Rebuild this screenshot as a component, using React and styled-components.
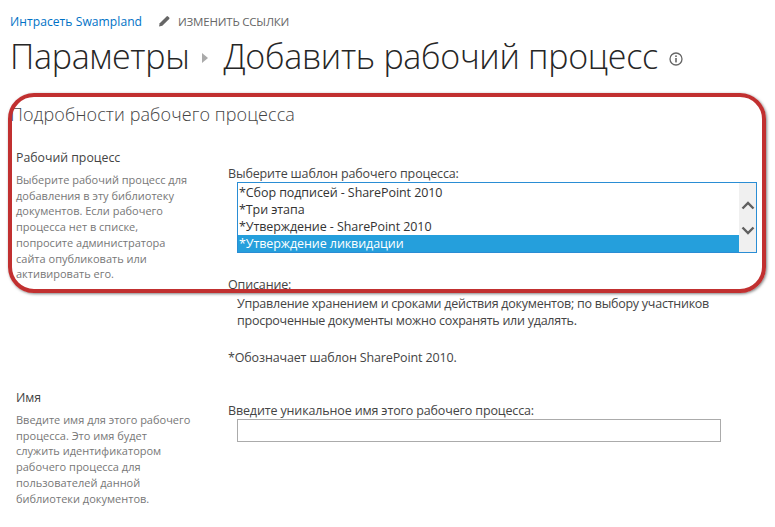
import React from "react";
import styled, { createGlobalStyle } from "styled-components";

const GlobalStyle = createGlobalStyle`
  html, body {
    margin: 0;
    background: #fff;
    font-family: "Open Sans", "Noto Sans", sans-serif;
    color: #444;
  }
`;

const Page = styled.div`
  position: relative;
  width: 775px;
  height: 527px;
  overflow: hidden;
  background: #fff;
`;

const TopBar = styled.div`
  display: flex;
  align-items: center;
  height: 16px;
  padding: 13px 0 0 10px;
`;

const SiteLink = styled.a`
  color: #0072c6;
  text-decoration: none;
  font-size: 12.1px;
  letter-spacing: 0.05px;
  white-space: nowrap;
`;

const EditLinks = styled.span`
  display: flex;
  align-items: center;
  gap: 7px;
  margin-left: 16px;
  color: #666;
  font-size: 11.5px;
  letter-spacing: -0.2px;
  white-space: nowrap;
`;

const Title = styled.h1`
  display: flex;
  align-items: center;
  margin: 3px 0 0 10px;
  height: 48px;
  font-family: "Open Sans", "Roboto", sans-serif;
  font-size: 34px;
  font-weight: 300;
  color: #262626;
  letter-spacing: -0.3px;
  white-space: nowrap;
`;

const Crumb = styled.svg`
  margin: 3px 15px 0 13px;
`;

const InfoIcon = styled.svg`
  margin: 5px 0 0 11px;
`;

const SectionTitle = styled.h2`
  margin: 22px 0 0 10px;
  height: 24px;
  font-size: 18px;
  line-height: 24px;
  font-weight: 300;
  color: #444;
  letter-spacing: 0.1px;
`;

const Row = styled.section`
  display: grid;
  grid-template-columns: 212px 1fr;
  padding-left: 16px;
  margin-top: ${(p) => p.$top}px;
`;

const Side = styled.div`
  width: 177px;
`;

const SideTitle = styled.div`
  font-size: 12.3px;
  line-height: 16px;
  color: #444;
`;

const SideText = styled.p`
  margin: 6px 0 0;
  font-size: 11px;
  line-height: 15.7px;
  color: #777;
`;

const Main = styled.div`
  padding-top: ${(p) => p.$top}px;
  font-size: 12.5px;
  color: #444;
  letter-spacing: -0.14px;
`;

const Label = styled.div`
  line-height: 16px;
`;

const ListBox = styled.div`
  display: flex;
  box-sizing: border-box;
  width: 520px;
  height: 71px;
  margin: 0 0 0 9px;
  border: 1px solid #2a8dd4;
  letter-spacing: -0.08px;
`;

const Options = styled.div`
  flex: 1;
  display: flex;
  flex-direction: column;
  padding-top: 1px;
`;

const Option = styled.div`
  height: 17px;
  padding-left: 1px;
  line-height: 18px;
  color: ${(p) => (p.$selected ? "#fff" : "#333")};
  background: ${(p) => (p.$selected ? "#259fdc" : "transparent")};
`;

const ScrollBar = styled.div`
  width: 17px;
  display: flex;
  flex-direction: column;
  align-items: center;
  gap: 16px;
  padding-top: 18px;
  box-sizing: border-box;
  background: #f0f0f0;
`;

const DescLabel = styled(Label)`
  margin-top: 24px;
`;

const Description = styled.p`
  margin: 2px 0 0 9px;
  line-height: 17px;
  width: 510px;
  letter-spacing: -0.25px;
`;

const Note = styled.p`
  margin: 21px 0 0;
  line-height: 16px;
`;

const NameInput = styled.input`
  display: block;
  width: 484px;
  height: 23px;
  margin: 0 0 0 9px;
  padding: 0;
  box-sizing: border-box;
  border: 1px solid #ababab;
  background: #fff;
`;

const Annotation = styled.div`
  position: absolute;
  left: 8px;
  top: 93px;
  width: 750px;
  height: 192px;
  border: 4px solid #c13030;
  border-radius: 26px;
  box-shadow: 1px 1px 3px rgba(0, 0, 0, 0.5);
  pointer-events: none;
`;

export default function App() {
  return (
    <Page>
      <GlobalStyle />
      <TopBar>
        <SiteLink href="#">Интрасеть Swampland</SiteLink>
        <EditLinks>
          <svg width="13" height="12" viewBox="0 0 13 12">
            <path d="M1 11.5l.7-3.2L8.6 1.4a1 1 0 0 1 1.4 0l1.2 1.2a1 1 0 0 1 0 1.4L4.3 10.8z" fill="#666" />
          </svg>
          ИЗМЕНИТЬ ССЫЛКИ
        </EditLinks>
      </TopBar>
      <Title>
        Параметры
        <Crumb width="6" height="10" viewBox="0 0 6 10">
          <path d="M0 0l6 5-6 5z" fill="#aaa" />
        </Crumb>
        Добавить рабочий процесс
        <InfoIcon width="14" height="14" viewBox="0 0 14 14">
          <circle cx="7" cy="7" r="6" fill="none" stroke="#666" strokeWidth="1.3" />
          <rect x="6.2" y="6" width="1.6" height="4.4" fill="#666" />
          <rect x="6.2" y="3.4" width="1.6" height="1.6" fill="#666" />
        </InfoIcon>
      </Title>
      <SectionTitle>Подробности рабочего процесса</SectionTitle>
      <Row $top={24}>
        <Side>
          <SideTitle>Рабочий процесс</SideTitle>
          <SideText>
            Выберите рабочий процесс для добавления в эту библиотеку документов. Если рабочего
            процесса нет в списке, попросите администратора сайта опубликовать или активировать его.
          </SideText>
        </Side>
        <Main $top={16}>
          <Label>Выберите шаблон рабочего процесса:</Label>
          <ListBox>
            <Options>
              <Option>*Сбор подписей - SharePoint 2010</Option>
              <Option>*Три этапа</Option>
              <Option>*Утверждение - SharePoint 2010</Option>
              <Option $selected>*Утверждение ликвидации</Option>
            </Options>
            <ScrollBar>
              <svg width="14" height="9" viewBox="0 0 14 9">
                <path d="M1.5 7.5L7 2l5.5 5.5" fill="none" stroke="#606060" strokeWidth="2.4" />
              </svg>
              <svg width="14" height="9" viewBox="0 0 14 9">
                <path d="M1.5 1.5L7 7l5.5-5.5" fill="none" stroke="#606060" strokeWidth="2.4" />
              </svg>
            </ScrollBar>
          </ListBox>
          <DescLabel>Описание:</DescLabel>
          <Description>
            Управление хранением и сроками действия документов; по выбору участников просроченные
            документы можно сохранять или удалять.
          </Description>
          <Note>*Обозначает шаблон SharePoint 2010.</Note>
        </Main>
      </Row>
      <Row $top={24}>
        <Side>
          <SideTitle>Имя</SideTitle>
          <SideText>
            Введите имя для этого рабочего процесса. Это имя будет служить идентификатором рабочего
            процесса для пользователей данной библиотеки документов.
          </SideText>
        </Side>
        <Main $top={13}>
          <Label>Введите уникальное имя этого рабочего процесса:</Label>
          <NameInput type="text" />
        </Main>
      </Row>
      <Annotation />
    </Page>
  );
}
